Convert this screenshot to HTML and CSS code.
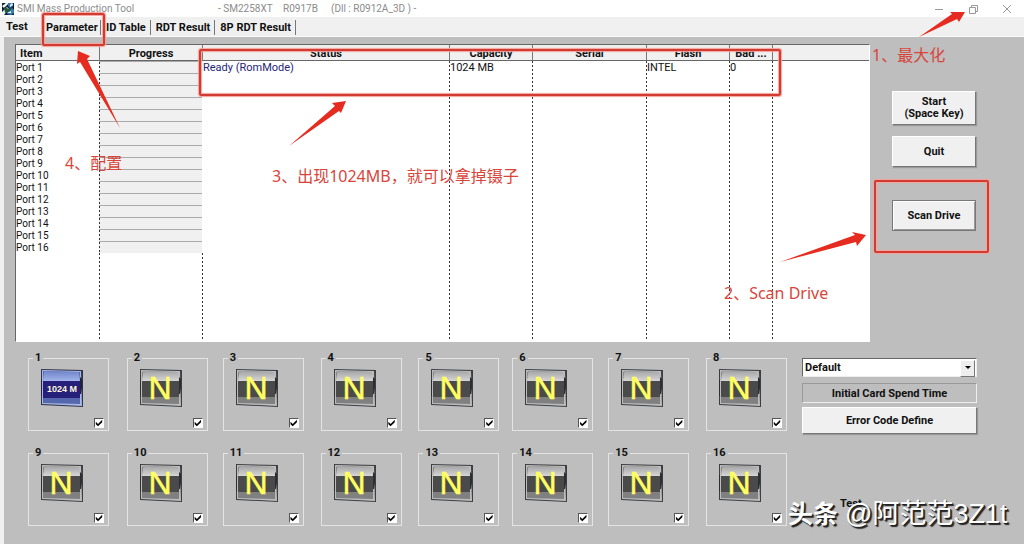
FILE: index.html
```html
<!DOCTYPE html>
<html lang="zh-CN">
<head>
<meta charset="utf-8">
<title>SMI Mass Production Tool</title>
<link rel="stylesheet" href="styles.css">
</head>
<body>
<svg class="defs" aria-hidden="true">
  <defs>
    <linearGradient id="gloss" x1="0" y1="0" x2="0" y2="1"><stop offset="0" stop-color="#a4a4a4"/><stop offset="1" stop-color="#d6d6d6"/></linearGradient>
    <linearGradient id="gloss-blue" x1="0" y1="0" x2="0" y2="1"><stop offset="0" stop-color="#6f83c8"/><stop offset="1" stop-color="#a3b4ea"/></linearGradient>
    <symbol id="tile" viewBox="0 0 44 40">
      <path d="M1 1 43 2 43 39 1 37Z" fill="#3c3e42"/>
      <path d="M2 2 41 3 42 38 2 36Z" fill="#bcbcbc"/>
      <path d="M3 5Q3 3 6 3L38 4 40 12 40 36 3 35Z" fill="#808080"/>
      <path d="M4 5Q4 3 7 3L38 4Q40 5 40 13H3Z" fill="url(#gloss)"/>
      <path d="M3 13H40V29H3Z" fill="#4a4a4a"/>
      <path d="M1 12H2V24L2 28H1Z M40 9 42 11V20L41 26H40Z" fill="#2c2e32"/>
    </symbol>
    <symbol id="tile-blue" viewBox="0 0 44 40">
      <path d="M1 1 43 2 43 39 1 37Z" fill="#30334a"/>
      <path d="M2 2 41 3 42 38 2 36Z" fill="#a9b7e4"/>
      <path d="M3 3 40 4V36L3 35Z" fill="#5668ad"/>
      <path d="M4 3 39 4 40 13H3Z" fill="url(#gloss-blue)"/>
      <path d="M3 13H40V30H3Z" fill="#27207a"/>
      <path d="M1 12H2V24L2 28H1Z M40 9 42 11V20L41 26H40Z" fill="#20223c"/>
    </symbol>
  </defs>
</svg>
<div class="window">
  <header class="titlebar">
    <svg class="app-icon" viewBox="0 0 14 14" aria-hidden="true">
      <rect x="1" y="1" width="12" height="12" fill="#10203c"/>
      <path d="M1 4 5 1H8L3 6Z M1 10 6 5 8 7 3 13H1Z" fill="#f0f5ed"/>
      <path d="M7 1H12V4L9 6 7 4Z M8 8 11 6 13 8V11L10 13 6 12Z" fill="#397db5"/>
      <path d="M3 5 8 7 12 4 9 9 4 11Z" fill="#225b3c"/>
      <path d="M9 3 11 1 12 3 9 5Z M6 11 10 9V11Z" fill="#e5f4f8"/>
    </svg>
    <span class="app-name">SMI Mass Production Tool</span>
    <span class="model">- SM2258XT</span>
    <span class="release">R0917B</span>
    <span>(Dll : R0912A_3D ) -</span>
    <div class="window-buttons">
      <button aria-label="Minimize"><svg viewBox="0 0 10 10"><path d="M1 5.500H9"/></svg></button>
      <button aria-label="Restore"><svg viewBox="0 0 10 10"><path d="M1.500 3.500H7.500V9.500H1.500Z M3.500 3.500V1.500H9.500V7.500H7.500"/></svg></button>
      <button aria-label="Close"><svg viewBox="0 0 10 10"><path d="M1 1 9 9M9 1 1 9"/></svg></button>
    </div>
  </header>
  <nav class="tabs">
    <button class="tab tab-active">Test</button>
    <button class="tab tab-framed">Parameter</button>
    <button class="tab">ID Table</button>
    <button class="tab">RDT Result</button>
    <button class="tab tab-wide">8P RDT Result</button>
  </nav>
  <main class="panel">
    <div class="upper">
      <div class="list">
        <table class="ports">
          <colgroup><col class="c-item"><col class="c-progress"><col class="c-status"><col class="c-capacity"><col class="c-serial"><col class="c-flash"><col class="c-bad"><col></colgroup>
          <thead><tr><th class="first">Item</th><th>Progress</th><th>Status</th><th>Capacity</th><th>Serial</th><th>Flash</th><th>Bad ...</th><th></th></tr></thead>
          <tbody>
            <tr><td>Port 1</td><td></td><td class="ready">Ready (RomMode)</td><td>1024 MB</td><td></td><td>INTEL</td><td>0</td><td></td></tr>
            <tr><td>Port 2</td><td></td><td></td><td></td><td></td><td></td><td></td><td></td></tr>
            <tr><td>Port 3</td><td></td><td></td><td></td><td></td><td></td><td></td><td></td></tr>
            <tr><td>Port 4</td><td></td><td></td><td></td><td></td><td></td><td></td><td></td></tr>
            <tr><td>Port 5</td><td></td><td></td><td></td><td></td><td></td><td></td><td></td></tr>
            <tr><td>Port 6</td><td></td><td></td><td></td><td></td><td></td><td></td><td></td></tr>
            <tr><td>Port 7</td><td></td><td></td><td></td><td></td><td></td><td></td><td></td></tr>
            <tr><td>Port 8</td><td></td><td></td><td></td><td></td><td></td><td></td><td></td></tr>
            <tr><td>Port 9</td><td></td><td></td><td></td><td></td><td></td><td></td><td></td></tr>
            <tr><td>Port 10</td><td></td><td></td><td></td><td></td><td></td><td></td><td></td></tr>
            <tr><td>Port 11</td><td></td><td></td><td></td><td></td><td></td><td></td><td></td></tr>
            <tr><td>Port 12</td><td></td><td></td><td></td><td></td><td></td><td></td><td></td></tr>
            <tr><td>Port 13</td><td></td><td></td><td></td><td></td><td></td><td></td><td></td></tr>
            <tr><td>Port 14</td><td></td><td></td><td></td><td></td><td></td><td></td><td></td></tr>
            <tr><td>Port 15</td><td></td><td></td><td></td><td></td><td></td><td></td><td></td></tr>
            <tr><td>Port 16</td><td></td><td></td><td></td><td></td><td></td><td></td><td></td></tr>
            <tr class="filler"><td></td><td></td><td></td><td></td><td></td><td></td><td></td><td></td></tr>
          </tbody>
        </table>
      </div>
      <aside class="actions">
        <button class="push push-tall">Start<br>(Space Key)</button>
        <button class="push">Quit</button>
        <button class="push push-scan">Scan Drive</button>
      </aside>
    </div>
    <div class="lower">
      <div class="slots">
        <fieldset class="slot"><legend>1</legend><svg class="tile" viewBox="0 0 44 40"><use href="#tile-blue"/><text class="size" x="22" y="24">1024 M</text></svg><input type="checkbox" checked aria-label="Port 1"></fieldset>
        <fieldset class="slot"><legend>2</legend><svg class="tile" viewBox="0 0 44 40"><use href="#tile"/><text class="letter" x="21" y="31">N</text></svg><input type="checkbox" checked aria-label="Port 2"></fieldset>
        <fieldset class="slot"><legend>3</legend><svg class="tile" viewBox="0 0 44 40"><use href="#tile"/><text class="letter" x="21" y="31">N</text></svg><input type="checkbox" checked aria-label="Port 3"></fieldset>
        <fieldset class="slot"><legend>4</legend><svg class="tile" viewBox="0 0 44 40"><use href="#tile"/><text class="letter" x="21" y="31">N</text></svg><input type="checkbox" checked aria-label="Port 4"></fieldset>
        <fieldset class="slot"><legend>5</legend><svg class="tile" viewBox="0 0 44 40"><use href="#tile"/><text class="letter" x="21" y="31">N</text></svg><input type="checkbox" checked aria-label="Port 5"></fieldset>
        <fieldset class="slot"><legend>6</legend><svg class="tile" viewBox="0 0 44 40"><use href="#tile"/><text class="letter" x="21" y="31">N</text></svg><input type="checkbox" checked aria-label="Port 6"></fieldset>
        <fieldset class="slot"><legend>7</legend><svg class="tile" viewBox="0 0 44 40"><use href="#tile"/><text class="letter" x="21" y="31">N</text></svg><input type="checkbox" checked aria-label="Port 7"></fieldset>
        <fieldset class="slot"><legend>8</legend><svg class="tile" viewBox="0 0 44 40"><use href="#tile"/><text class="letter" x="21" y="31">N</text></svg><input type="checkbox" checked aria-label="Port 8"></fieldset>
        <fieldset class="slot"><legend>9</legend><svg class="tile" viewBox="0 0 44 40"><use href="#tile"/><text class="letter" x="21" y="31">N</text></svg><input type="checkbox" checked aria-label="Port 9"></fieldset>
        <fieldset class="slot"><legend>10</legend><svg class="tile" viewBox="0 0 44 40"><use href="#tile"/><text class="letter" x="21" y="31">N</text></svg><input type="checkbox" checked aria-label="Port 10"></fieldset>
        <fieldset class="slot"><legend>11</legend><svg class="tile" viewBox="0 0 44 40"><use href="#tile"/><text class="letter" x="21" y="31">N</text></svg><input type="checkbox" checked aria-label="Port 11"></fieldset>
        <fieldset class="slot"><legend>12</legend><svg class="tile" viewBox="0 0 44 40"><use href="#tile"/><text class="letter" x="21" y="31">N</text></svg><input type="checkbox" checked aria-label="Port 12"></fieldset>
        <fieldset class="slot"><legend>13</legend><svg class="tile" viewBox="0 0 44 40"><use href="#tile"/><text class="letter" x="21" y="31">N</text></svg><input type="checkbox" checked aria-label="Port 13"></fieldset>
        <fieldset class="slot"><legend>14</legend><svg class="tile" viewBox="0 0 44 40"><use href="#tile"/><text class="letter" x="21" y="31">N</text></svg><input type="checkbox" checked aria-label="Port 14"></fieldset>
        <fieldset class="slot"><legend>15</legend><svg class="tile" viewBox="0 0 44 40"><use href="#tile"/><text class="letter" x="21" y="31">N</text></svg><input type="checkbox" checked aria-label="Port 15"></fieldset>
        <fieldset class="slot"><legend>16</legend><svg class="tile" viewBox="0 0 44 40"><use href="#tile"/><text class="letter" x="21" y="31">N</text></svg><input type="checkbox" checked aria-label="Port 16"></fieldset>
      </div>
      <div class="options">
        <div class="combo">
          <select aria-label="Profile"><option>Default</option></select>
        </div>
        <div class="caption">Initial Card Spend Time</div>
        <button class="push push-wide">Error Code Define</button>
        <div class="test-label">Test</div>
      </div>
    </div>
  </main>
  <div class="notes">
    <div class="frame frame-parameter"></div>
    <div class="frame frame-status"></div>
    <div class="frame frame-scan"></div>
    <svg class="arrows" viewBox="0 0 1024 544" aria-hidden="true">
      <path d="M919 37 952 14 950 12 965 12 959 22 957 19Z"/>
      <path d="M780 262 855 235 852 232 866 235 857 246 856 242Z"/>
      <path d="M289 146 335 106 332 103 346 101 341 113 339 111Z"/>
      <path d="M120 128 80 62 77 64 78 51 90 56 87 59Z"/>
    </svg>
    <p class="note note-1">1、最大化</p>
    <p class="note note-2">2、Scan Drive</p>
    <p class="note note-3">3、出现1024MB，就可以拿掉镊子</p>
    <p class="note note-4">4、配置</p>
    <p class="watermark"><b>头条</b><span>@阿范范3Z1t</span></p>
  </div>
</div>
</body>
</html>
```
FILE: styles.css
```css
* { box-sizing: border-box; }
body { margin: 0; font: 11px/12px Roboto, "Liberation Sans", sans-serif; color: #111; }
button, select { font: inherit; color: inherit; }
.defs { position: absolute; width: 0; height: 0; }
.window { position: relative; display: flex; flex-direction: column; min-height: 100vh; background: #f0f0f0; overflow: hidden; }

.titlebar { display: flex; align-items: center; height: 17px; background: #fff; color: #8c8c8c; font: 10px/16px Roboto, sans-serif; white-space: pre; }
.app-icon { width: 14px; height: 14px; margin: 0 2px 0 1px; }
.app-name { width: 201px; }
.model { width: 65px; }
.release { width: 48px; }
.window-buttons { display: flex; gap: 24px; margin-left: auto; padding-right: 12px; }
.window-buttons button { width: 10px; height: 10px; padding: 0; border: 0; background: none; display: flex; }
.window-buttons svg { width: 10px; height: 10px; fill: none; stroke: #999; }

.tabs { display: flex; align-items: center; height: 20px; padding: 2px 0 0 6px; border-bottom: 1px solid #fafafa; }
.tab { height: 15px; padding: 0 4px 0 5px; border: 0; border-right: 1px solid #777; background: none; font-weight: 700; line-height: 15px; white-space: nowrap; }
.tab-active { padding: 0; border: 0; width: 37px; text-align: left; align-self: flex-start; }
.tab-framed { width: 58px; padding: 0 3px; }

.panel { flex: 1; display: flex; flex-direction: column; margin-left: 4px; padding-top: 7px; background: #bebebe; }
.upper { flex: 1; display: flex; padding-left: 11px; }
.list { flex: 1; display: flex; border: 1px solid #666; border-right-color: #fff; border-bottom-color: #fff; background: #fff; }
.ports { width: 100%; table-layout: fixed; border-collapse: separate; border-spacing: 0; }
.c-item { width: 83px; }
.c-progress { width: 103px; }
.c-status { width: 247px; }
.c-capacity { width: 83px; }
.c-serial { width: 114px; }
.c-flash { width: 83px; }
.c-bad { width: 43px; }
.ports th { height: 16px; padding: 2px 0 0; background: #f0f0f0; border-bottom: 1px solid #666; border-left: 1px solid #777; line-height: 13px; }
.ports th.first { border-left: 0; padding-left: 4px; text-align: left; }
.ports td { height: 12px; padding: 2px 0 0 1px; line-height: 10px; white-space: nowrap; background: repeating-linear-gradient(#333 0 2px, transparent 2px 4px) left top / 1px 100% no-repeat; }
.ports td:first-child { padding-left: 0; background: none; font-size: 10px; }
.ports td:nth-child(2) { background-color: #f0f0f0; border-top: 1px solid #aaa; }
.ports tr:not(.filler) td:nth-child(3) { background: none; }
.ports .filler td { height: auto; }
.ports .filler td:nth-child(2) { background-color: transparent; border-top: 0; }
.ports td.ready { color: #262678; }

.actions { width: 154px; padding: 47px 48px 0 22px; display: flex; flex-direction: column; gap: 11px; }
.push { height: 31px; padding: 0; border: 1px solid; border-color: #fff #777 #777 #fff; background: #f0f0f0; box-shadow: 1px 1px 1px #999; font-weight: 700; }
.push-tall { height: 34px; }
.push-scan { margin-top: 22px; border-color: #777; box-shadow: inset 1px 1px #fff, inset -1px -1px #999; }

.lower { display: flex; gap: 15px; padding: 10px 47px 18px 24px; }
.slots { flex: 1; display: grid; grid-template-columns: 99fr 96fr 98fr 98fr 94fr 96fr 98fr 80fr; row-gap: 16px; }
.slot { display: flex; flex-direction: column; width: 81px; min-width: 0; height: 79px; margin: 0; padding: 4px 4px 0 11px; border: 1px solid #e4e4e4; box-shadow: none; }
.slot legend { margin-left: -7px; padding: 0 2px; font-weight: 700; line-height: 12px; }
.tile { width: 44px; height: 40px; flex: none; }
.letter { font: 32px "Liberation Sans", sans-serif; fill: #ffff62; stroke: #ffff62; stroke-width: 0.500; text-anchor: middle; }
.size { font: bold 9px "Liberation Sans", sans-serif; fill: #fff6dd; text-anchor: middle; }
input[type="checkbox"] { appearance: none; align-self: flex-end; width: 10px; height: 10px; margin: 10px 0 0; border: 1px solid; border-color: #555 #fff #fff #555; background: #fff; display: grid; }
input[type="checkbox"]:checked::after { content: ""; background: #000; clip-path: polygon(10% 35%, 38% 62%, 90% 10%, 90% 42%, 38% 92%, 10% 65%); }

.options { width: 175px; padding-top: 6px; display: flex; flex-direction: column; }
.combo { position: relative; height: 19px; border: 1px solid; border-color: #666 #eee #eee #666; background: #fff; display: flex; }
.combo select { flex: 1; appearance: none; border: 0; padding: 0 16px 0 2px; background: transparent; font-weight: 700; line-height: 17px; }
.combo::before { content: ""; position: absolute; right: 1px; top: 1px; width: 13px; height: 15px; border: 1px solid; border-color: #fff #777 #777 #fff; background: #eee; }
.combo::after { content: ""; position: absolute; right: 5px; top: 7px; border: 3px solid transparent; border-top-color: #000; border-bottom: 0; }
.caption { height: 20px; margin: 6px 0 4px; border: 1px solid; border-color: #999 #eee #eee #999; font-weight: 700; line-height: 19px; text-align: center; }
.push-wide { height: 27px; }
.test-label { margin: 64px 0 0 38px; font-weight: 700; }

.notes { position: absolute; top: 0; left: 0; width: 1024px; height: 544px; pointer-events: none; }
.frame { position: absolute; border: 2px solid #d13b31; border-radius: 2px; box-shadow: 0 0 1px 1px #f3a49c, inset 0 0 1px 1px #f3a49c; }
.frame-parameter { left: 42px; top: 13px; width: 63px; height: 33px; }
.frame-status { left: 199px; top: 49px; width: 582px; height: 47px; }
.frame-scan { left: 874px; top: 180px; width: 115px; height: 73px; }
.arrows { position: absolute; inset: 0; fill: #e62c20; }
.note { position: absolute; margin: 0; color: #d8453b; font: 16px/20px "Noto Sans", "Noto Sans CJK SC", sans-serif; white-space: nowrap; }
.note-1 { left: 872px; top: 45px; }
.note-2 { left: 724px; top: 283px; }
.note-3 { left: 272px; top: 166px; }
.note-4 { left: 65px; top: 153px; }
.watermark { position: absolute; left: 788px; top: 497px; margin: 0; display: flex; align-items: center; gap: 7px; color: #fff; text-shadow: 1px 1px #222, 2px 2px 1px #222; font: 27px/34px "Liberation Sans", "Noto Sans CJK SC", sans-serif; white-space: nowrap; }
.watermark b { font-size: 25px; }
```
